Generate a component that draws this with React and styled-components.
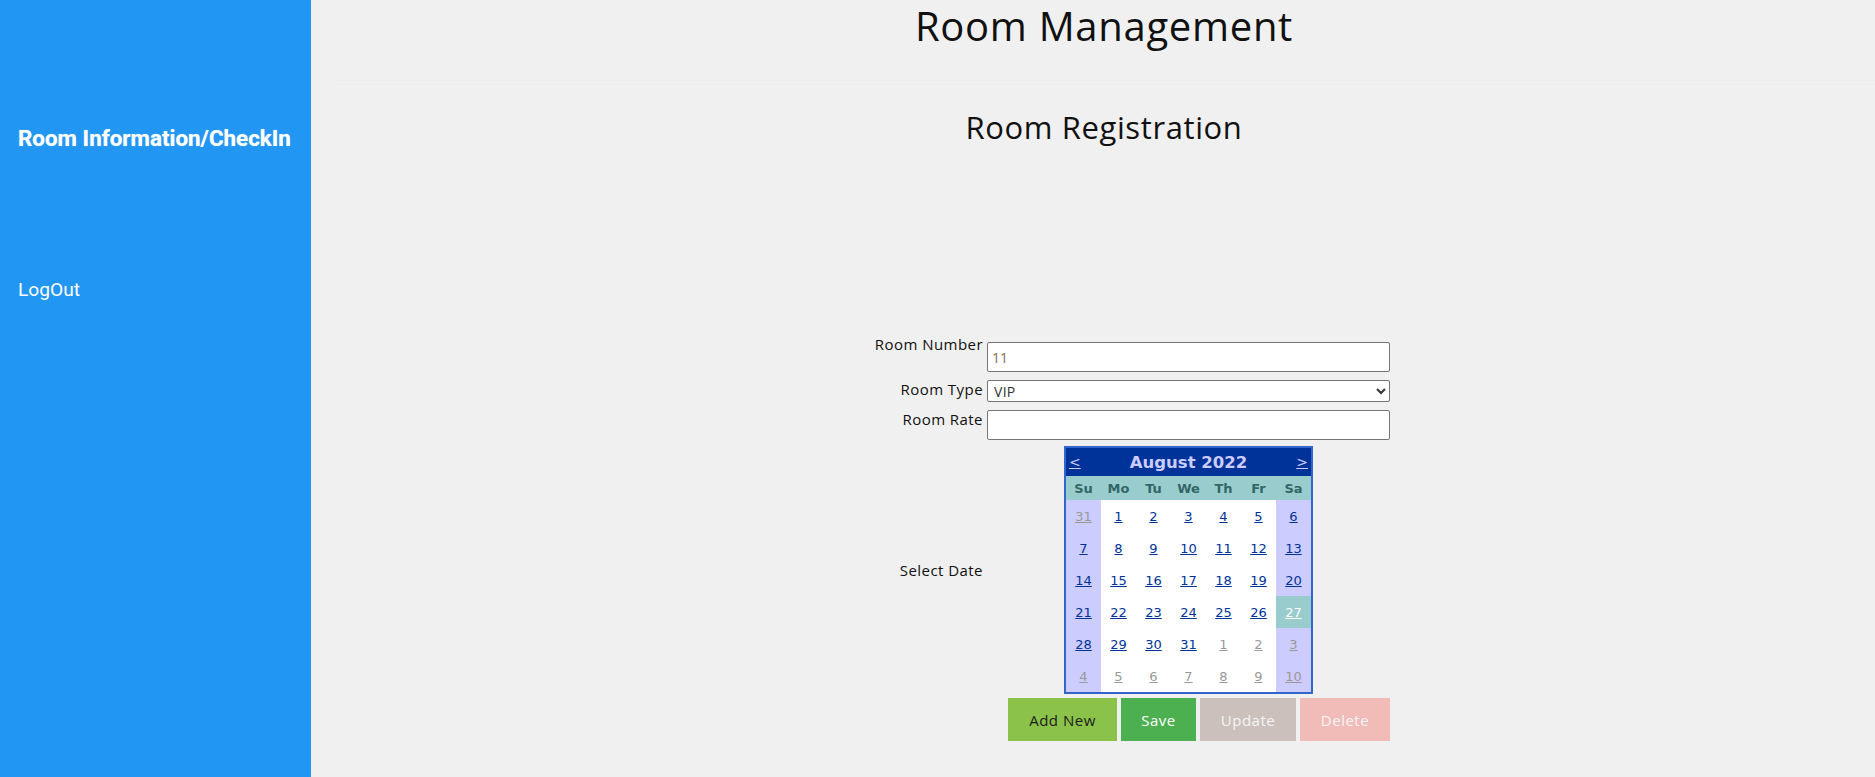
import React from 'react';
import styled, { createGlobalStyle } from 'styled-components';

const Global = createGlobalStyle`
  html, body { margin: 0; padding: 0; background: #f0f0f0; }
  body { font-family: "Open Sans", "DejaVu Sans", sans-serif; color: #111; }
  * { box-sizing: border-box; }
`;

const Page = styled.div`
  display: flex;
  min-height: 777px;
`;

const Sidebar = styled.nav`
  width: 311px;
  flex: 0 0 311px;
  background: #2196f3;
  padding: 125px 0 0 18px;
  font-family: Roboto, "Liberation Sans", sans-serif;
  color: #fff;
  display: flex;
  flex-direction: column;
`;

const SideTitle = styled.a`
  font-size: 22.4px;
  font-weight: 700;
  line-height: 26px;
  color: #fff;
  text-decoration: none;
  text-shadow: 0 0 1px rgba(255, 255, 255, 0.6);
`;

const SideLink = styled.a`
  margin-top: 128px;
  font-size: 19.2px;
  line-height: 22px;
  color: #fff;
  text-decoration: none;
`;

const Main = styled.main`
  flex: 1;
  padding-left: 22px;
  display: flex;
  flex-direction: column;
`;

const Header = styled.header`
  height: 81px;
  border-bottom: 1px solid #ececec;
  text-align: center;
  padding-top: 6px;
`;

const Title = styled.h1`
  margin: 0;
  font-size: 40px;
  font-weight: 400;
  line-height: 40px;
  letter-spacing: 0.7px;
`;

const SubTitle = styled.h2`
  margin: 26px 0 0;
  text-align: center;
  font-size: 31px;
  font-weight: 400;
  line-height: 40px;
  letter-spacing: 0.6px;
`;

const Form = styled.form`
  margin: 188px 0 0 539px;
  width: 518px;
  display: flex;
  flex-direction: column;
`;

const Row = styled.div`
  display: flex;
  gap: 4px;
  margin-top: ${(p) => p.$mt || 0}px;
  align-items: ${(p) => (p.$center ? 'center' : 'flex-start')};
`;

const Label = styled.label`
  width: 111px;
  flex: 0 0 111px;
  text-align: right;
  font-size: 15px;
  line-height: 18px;
  letter-spacing: 0.45px;
  white-space: nowrap;
`;

const TextInput = styled.input`
  width: 403px;
  height: 30px;
  margin-top: ${(p) => p.$offset || 0}px;
  border: 1px solid #767676;
  border-radius: 2px;
  background: #fff;
  padding: 0 4px;
  font-family: "Open Sans", sans-serif;
  font-size: 14px;
  color: #8a6a4c;
  outline: none;
`;

const Select = styled.select`
  width: 403px;
  height: 22px;
  border: 1px solid #767676;
  border-radius: 2px;
  background: #fff;
  font-family: "Open Sans", sans-serif;
  font-size: 14px;
  letter-spacing: 0.3px;
  color: #333;
  padding: 0 2px;
`;

const CalCell = styled.div`
  width: 403px;
  display: flex;
  justify-content: center;
`;

const Calendar = styled.div`
  width: 249px;
  border: 2px solid #3366cc;
  background: #fff;
  font-family: "DejaVu Sans", Verdana, sans-serif;
`;

const CalHead = styled.div`
  height: 28px;
  background: #003399;
  color: #ccccff;
  display: flex;
  align-items: center;
  justify-content: space-between;
  padding: 0 3px 0 3px;
`;

const NavLink = styled.a`
  color: #ccccff;
  text-decoration: underline;
  font-size: 14px;
  width: 20px;
  text-align: ${(p) => (p.$right ? 'right' : 'left')};
`;

const MonthTitle = styled.span`
  font-weight: 700;
  font-size: 16.5px;
`;

const Grid7 = styled.div`
  display: grid;
  grid-template-columns: repeat(7, 35px);
`;

const DayName = styled.div`
  height: 24px;
  background: #99cccc;
  color: #336666;
  font-weight: 700;
  font-size: 13px;
  display: flex;
  align-items: center;
  justify-content: center;
`;

const DayCell = styled.div`
  height: 32px;
  display: flex;
  align-items: center;
  justify-content: center;
  background: ${(p) => (p.$today ? '#99cccc' : p.$weekend ? '#ccccff' : '#ffffff')};
`;

const DayLink = styled.a`
  font-size: 13px;
  text-decoration: underline;
  color: ${(p) => (p.$today ? '#ffffff' : p.$other ? '#999999' : '#003399')};
`;

const Buttons = styled.div`
  width: 403px;
  display: flex;
  justify-content: flex-end;
  gap: 4px;
`;

const Button = styled.button`
  height: 43px;
  width: ${(p) => p.$w}px;
  border: none;
  font-family: "Open Sans", sans-serif;
  font-size: 15px;
  letter-spacing: 0.5px;
  background: ${(p) => p.$bg};
  color: ${(p) => p.$fg};
  opacity: ${(p) => (p.disabled ? 0.3 : 1)};
  padding: 0;
  cursor: pointer;
`;

const weeks = [
  [[31, true], [1], [2], [3], [4], [5], [6]],
  [[7], [8], [9], [10], [11], [12], [13]],
  [[14], [15], [16], [17], [18], [19], [20]],
  [[21], [22], [23], [24], [25], [26], [27]],
  [[28], [29], [30], [31], [1, true], [2, true], [3, true]],
  [[4, true], [5, true], [6, true], [7, true], [8, true], [9, true], [10, true]],
];

const dayNames = ['Su', 'Mo', 'Tu', 'We', 'Th', 'Fr', 'Sa'];

export default function App() {
  return (
    <>
      <Global />
      <Page>
        <Sidebar>
          <SideTitle href="#">Room Information/CheckIn</SideTitle>
          <SideLink href="#">LogOut</SideLink>
        </Sidebar>
        <Main>
          <Header>
            <Title>Room Management</Title>
          </Header>
          <SubTitle>Room Registration</SubTitle>
          <Form onSubmit={(e) => e.preventDefault()}>
            <Row>
              <Label>Room Number</Label>
              <TextInput $offset={7} defaultValue="11" />
            </Row>
            <Row $mt={8}>
              <Label>Room Type</Label>
              <Select defaultValue="VIP">
                <option>VIP</option>
                <option>Deluxe</option>
                <option>Standard</option>
              </Select>
            </Row>
            <Row $mt={8}>
              <Label>Room Rate</Label>
              <TextInput defaultValue="" />
            </Row>
            <Row $mt={6} $center>
              <Label>Select Date</Label>
              <CalCell>
                <Calendar>
                  <CalHead>
                    <NavLink href="#">&lt;</NavLink>
                    <MonthTitle>August 2022</MonthTitle>
                    <NavLink href="#" $right>&gt;</NavLink>
                  </CalHead>
                  <Grid7>
                    {dayNames.map((d) => (
                      <DayName key={d}>{d}</DayName>
                    ))}
                  </Grid7>
                  <Grid7>
                    {weeks.map((w, wi) =>
                      w.map(([n, other], di) => {
                        const today = wi === 3 && di === 6;
                        return (
                          <DayCell key={wi + '-' + di} $weekend={di === 0 || di === 6} $today={today}>
                            <DayLink href="#" $other={other} $today={today}>{n}</DayLink>
                          </DayCell>
                        );
                      })
                    )}
                  </Grid7>
                </Calendar>
              </CalCell>
            </Row>
            <Row $mt={4}>
              <Label />
              <Buttons>
                <Button type="button" $w={109} $bg="#8bc34a" $fg="#1c1c1c">Add New</Button>
                <Button type="button" $w={75} $bg="#4caf50" $fg="#ffffff">Save</Button>
                <Button type="button" $w={96} $bg="#795548" $fg="#ffffff" disabled>Update</Button>
                <Button type="button" $w={90} $bg="#f44336" $fg="#ffffff" disabled>Delete</Button>
              </Buttons>
            </Row>
          </Form>
        </Main>
      </Page>
    </>
  );
}
